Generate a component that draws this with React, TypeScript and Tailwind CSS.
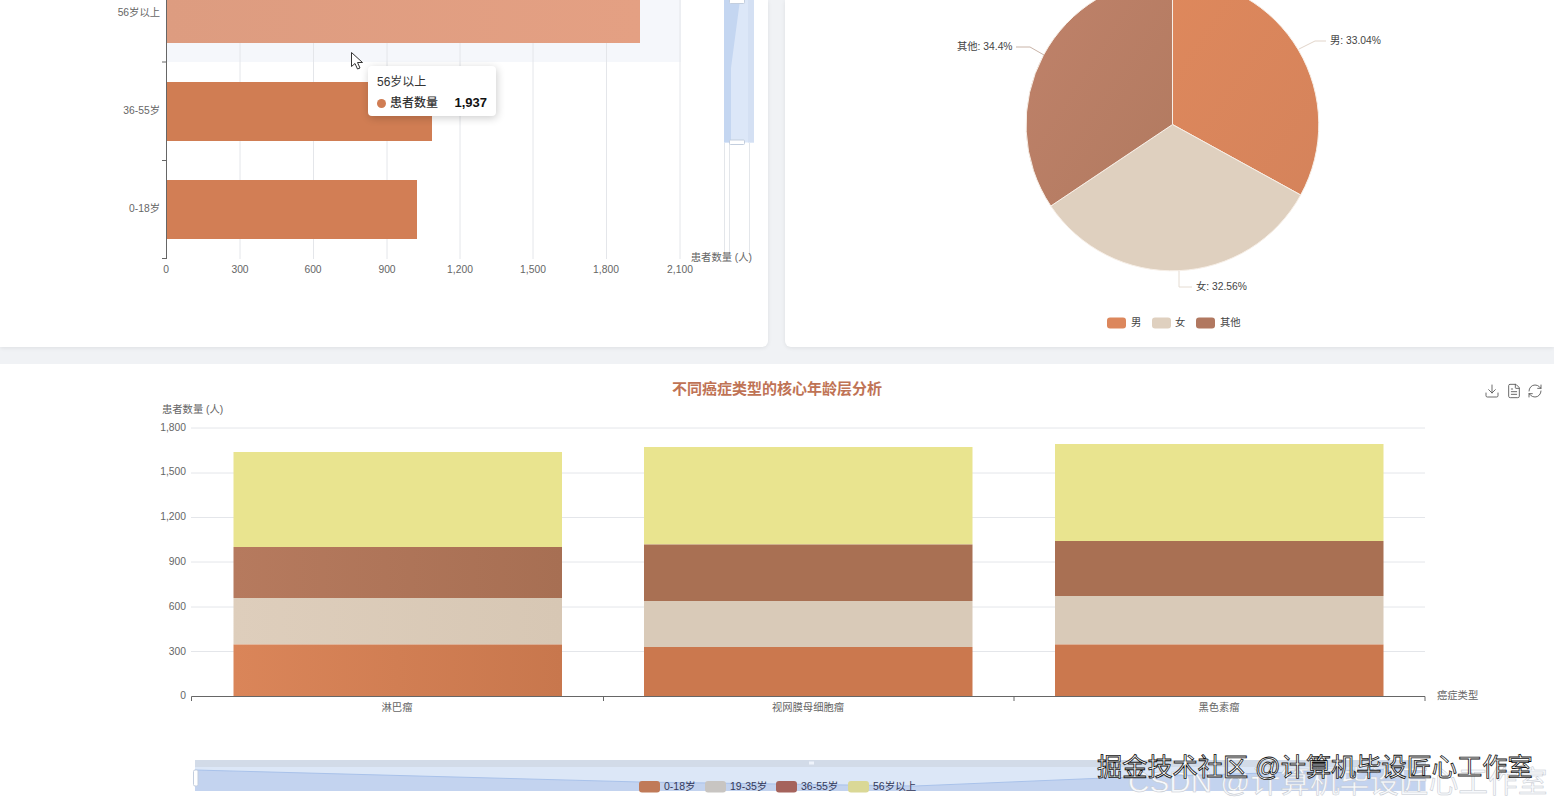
import { Download, FileText, RefreshCw } from "lucide-react";

const FONT = '"Liberation Sans","Noto Sans CJK SC",sans-serif';

function Defs() {
  return (
    <defs>
      <linearGradient id="g-top" x1="0" x2="1" y1="0" y2="0">
        <stop offset="0" stopColor="#dd9c80" />
        <stop offset="1" stopColor="#e4a083" />
      </linearGradient>
      <linearGradient id="g-o1" x1="0" x2="1" y1="0" y2="0">
        <stop offset="0" stopColor="#da8559" />
        <stop offset="1" stopColor="#c8774d" />
      </linearGradient>
      <linearGradient id="g-br1" x1="0" x2="1" y1="0" y2="0">
        <stop offset="0" stopColor="#b67a5e" />
        <stop offset="1" stopColor="#a76f53" />
      </linearGradient>
      <linearGradient id="g-bg1" x1="0" x2="1" y1="0" y2="0">
        <stop offset="0" stopColor="#decebc" />
        <stop offset="1" stopColor="#d7c7b4" />
      </linearGradient>
      <linearGradient id="g-male" x1="0" x2="1" y1="0" y2="1">
        <stop offset="0" stopColor="#de885c" />
        <stop offset="1" stopColor="#d5835b" />
      </linearGradient>
      <linearGradient id="g-other" x1="0" x2="1" y1="0" y2="1">
        <stop offset="0" stopColor="#c0826a" />
        <stop offset="1" stopColor="#b17a60" />
      </linearGradient>
    </defs>
  );
}

function BarChart() {
  const grid = [240, 313.5, 387, 460, 533, 606.5, 680];
  const labels: [number, string][] = [
    [166, "0"], [240, "300"], [313, "600"], [387, "900"], [460, "1,200"], [533, "1,500"], [606, "1,800"], [680, "2,100"],
  ];
  return (
    <svg viewBox="0 0 768 347" className="block w-full h-full" style={{ fontFamily: FONT }}>
      <Defs />
      <rect x="167" y="0" width="514" height="62" fill="#f5f7fb" />
      {grid.map((x) => (
        <line key={x} x1={x} x2={x} y1="0" y2="259" stroke="#e4e6ea" strokeWidth="1" />
      ))}
      <rect x="167" y="-5" width="473" height="48" fill="url(#g-top)" />
      <rect x="167" y="82" width="265" height="59" fill="#d07d53" />
      <rect x="167" y="180" width="250" height="59" fill="#d27e55" />
      <path d="M166.5 0V259M162 62H167M162 160.5H167M162 258.5H167" stroke="#666" strokeWidth="1" fill="none" />
      <g fontSize="10.3" fill="#666" textAnchor="end">
        <text x="160" y="16">56岁以上</text>
        <text x="160" y="114">36-55岁</text>
        <text x="160" y="212">0-18岁</text>
      </g>
      <g fontSize="10.3" fill="#666" textAnchor="middle">
        {labels.map(([x, t]) => (
          <text key={t} x={x} y="273">{t}</text>
        ))}
      </g>
      <rect x="724" y="0" width="30" height="142.5" fill="#dce7f8" />
      <rect x="748" y="0" width="6" height="142.5" fill="#d4e0f3" />
      <path d="M724 0H740L731 68V142.5H724Z" fill="#c4d6f1" />
      <path d="M724.5 143V256M729.5 143V256M749.5 143V256" stroke="#e3e6ea" strokeWidth="1" fill="none" />
      <rect x="729.5" y="-3" width="15" height="6.5" rx="1" fill="#fff" stroke="#c3cede" />
      <rect x="729.5" y="140" width="15" height="4.5" rx="1" fill="#fff" stroke="#c3cede" />
      <text x="752" y="261" fontSize="10.3" fill="#666" textAnchor="end">患者数量 (人)</text>
    </svg>
  );
}

function PieChart() {
  return (
    <svg viewBox="785 0 769 347" className="block w-full h-full" style={{ fontFamily: FONT }}>
      <Defs />
      <g stroke="#f7efe7" strokeWidth="1">
        <path d="M1172.5 124.5V-22A146.5 146.5 0 0 1 1300.7 195Z" fill="url(#g-male)" />
        <path d="M1172.5 124.5L1300.7 195A146.5 146.5 0 0 1 1050.8 206Z" fill="#dfd0bf" />
        <path d="M1172.5 124.5L1050.8 206A146.5 146.5 0 0 1 1172.5 -22Z" fill="url(#g-other)" />
      </g>
      <g fill="none" strokeWidth="1">
        <path d="M1299 49L1315 41H1326" stroke="#e2d5ca" />
        <path d="M1016 47H1030L1044 55" stroke="#c9b4a8" />
        <path d="M1179 271V287H1192" stroke="#e5dcd2" />
      </g>
      <g fontSize="10.3" fill="#444">
        <text x="1330" y="44">男: 33.04%</text>
        <text x="957" y="50">其他: 34.4%</text>
        <text x="1196" y="290">女: 32.56%</text>
      </g>
      <rect x="1107" y="317.5" width="19" height="11" rx="3" fill="#dc875c" />
      <rect x="1152" y="317.5" width="19" height="11" rx="3" fill="#dfd0bf" />
      <rect x="1196" y="317.5" width="19" height="11" rx="3" fill="#b17860" />
      <g fontSize="10.3" fill="#444">
        <text x="1131" y="326">男</text>
        <text x="1175" y="326">女</text>
        <text x="1220" y="326">其他</text>
      </g>
    </svg>
  );
}

const stacks = [
  { x: 233.5, y: [452, 547, 598, 644.5], first: true },
  { x: 644, y: [447, 544.5, 601, 647], first: false },
  { x: 1055, y: [444, 541, 596, 644.5], first: false },
];

function StackedChart() {
  const yLabels: [number, string][] = [
    [431, "1,800"], [475, "1,500"], [520, "1,200"], [565, "900"], [610, "600"], [655, "300"], [699, "0"],
  ];
  const rows = [428, 473, 517.5, 562, 607, 651.5];
  return (
    <svg viewBox="0 364 1554 440" className="block w-full h-full" style={{ fontFamily: FONT }}>
      <Defs />
      <text x="777" y="394" fontSize="15" fontWeight="700" fill="#bf7355" textAnchor="middle">不同癌症类型的核心年龄层分析</text>
      <text x="162" y="413" fontSize="10.3" fill="#666">患者数量 (人)</text>
      {rows.map((y) => (
        <line key={y} x1="191" x2="1425" y1={y} y2={y} stroke="#e4e6ea" strokeWidth="1" />
      ))}
      <g fontSize="10.3" fill="#666" textAnchor="end">
        {yLabels.map(([y, t]) => (
          <text key={t} x="186" y={y}>{t}</text>
        ))}
      </g>
      {stacks.map((s) => (
        <g key={s.x}>
          <rect x={s.x} y={s.y[0]} width="328.5" height={s.y[1] - s.y[0]} fill="#e9e48f" />
          <rect x={s.x} y={s.y[1]} width="328.5" height={s.y[2] - s.y[1]} fill={s.first ? "url(#g-br1)" : "#a97053"} />
          <rect x={s.x} y={s.y[2]} width="328.5" height={s.y[3] - s.y[2]} fill={s.first ? "url(#g-bg1)" : "#d9cab8"} />
          <rect x={s.x} y={s.y[3]} width="328.5" height={696 - s.y[3]} fill={s.first ? "url(#g-o1)" : "#cb784e"} />
        </g>
      ))}
      <path d="M191.5 701V696.5H1425V701M603.5 696.5V701M1014 696.5V701" stroke="#666" strokeWidth="1" fill="none" />
      <g fontSize="10.3" fill="#666" textAnchor="middle">
        <text x="397" y="711">淋巴瘤</text>
        <text x="808" y="711">视网膜母细胞瘤</text>
        <text x="1219" y="711">黑色素瘤</text>
      </g>
      <text x="1437" y="699" fontSize="10.3" fill="#666">癌症类型</text>

      <rect x="195" y="767" width="1231" height="24" fill="#dce7f7" />
      <rect x="195" y="760" width="1231" height="7" fill="#d2dbe8" />
      <path d="M195 770L640 782L915 786L1105 778L1425 768V791H195Z" fill="#c3d3ef" />
      <path d="M195 770L640 782L915 786L1105 778L1425 768" fill="none" stroke="#a9c2ea" strokeWidth="1" />
      <rect x="193.5" y="770" width="4.5" height="16" rx="1.5" fill="#fff" stroke="#c3cede" />
      <rect x="809" y="761.5" width="5" height="3" fill="#eef3fb" />

      <rect x="639" y="781" width="21" height="11.5" rx="3" fill="#c07a58" />
      <rect x="705" y="781" width="21" height="11.5" rx="3" fill="#c8c5c2" />
      <rect x="776" y="781" width="21" height="11.5" rx="3" fill="#a5635c" />
      <rect x="848" y="781" width="21" height="11.5" rx="3" fill="#dad896" />
      <g fontSize="10.5" fill="#33395a">
        <text x="664" y="790">0-18岁</text>
        <text x="730" y="790">19-35岁</text>
        <text x="801" y="790">36-55岁</text>
        <text x="873" y="790">56岁以上</text>
      </g>
    </svg>
  );
}

function Cursor() {
  return (
    <svg className="absolute left-[350px] top-[51px]" width="14" height="20" viewBox="0 0 14 20">
      <path d="M1.5 1.5V15.5L5 12.5L7.5 18L10 17L7.5 11.5H12.5Z" fill="#fff" stroke="#333" strokeWidth="1" strokeLinejoin="round" />
    </svg>
  );
}

export default function App() {
  return (
    <div className="relative h-[804px] w-[1554px] overflow-hidden bg-[#f0f2f5] flex flex-col gap-[17px]" style={{ fontFamily: FONT }}>
      <div className="flex gap-[17px] h-[347px] shrink-0">
        <div className="relative w-[768px] shrink-0 bg-white rounded-br-[6px] shadow-[0_1px_4px_rgba(0,0,0,0.08)]">
          <BarChart />
        </div>
        <div className="flex-1 bg-white rounded-bl-[6px] shadow-[0_1px_4px_rgba(0,0,0,0.08)]">
          <PieChart />
        </div>
      </div>
      <div className="relative flex-1 bg-white">
        <StackedChart />
        <div className="absolute right-[11px] top-[19px] flex items-center gap-[5.5px] text-[#555]">
          <Download size={16} strokeWidth={1.3} />
          <FileText size={16} strokeWidth={1.3} />
          <RefreshCw size={16} strokeWidth={1.3} />
        </div>
      </div>

      <Cursor />

      <div className="absolute left-[368px] top-[66px] w-[128px] h-[50px] bg-white rounded-[4px] shadow-[1px_2px_8px_rgba(0,0,0,0.2)] px-[9px] pt-[7px] text-[12px] leading-[18px] text-[#333]">
        <div>56岁以上</div>
        <div className="flex items-center mt-[3px]">
          <span className="w-[9px] h-[9px] rounded-full bg-[#d07d53] mr-[4px]" />
          <span className="font-medium">患者数量</span>
          <span className="ml-auto text-[13px] font-bold text-[#111]">1,937</span>
        </div>
      </div>

      <div className="absolute left-[1128px] top-[767px] whitespace-nowrap text-[29.7px] leading-[30px] text-[#f7f9fc] [-webkit-text-stroke:0.5px_#c4c8cf]">
        CSDN @计算机毕设匠心工作室
      </div>
      <div className="absolute left-[1097px] top-[752px] whitespace-nowrap text-[25.2px] leading-[30px] text-white [-webkit-text-stroke:0.8px_#111]">
        掘金技术社区 @计算机毕设匠心工作室
      </div>
    </div>
  );
}
